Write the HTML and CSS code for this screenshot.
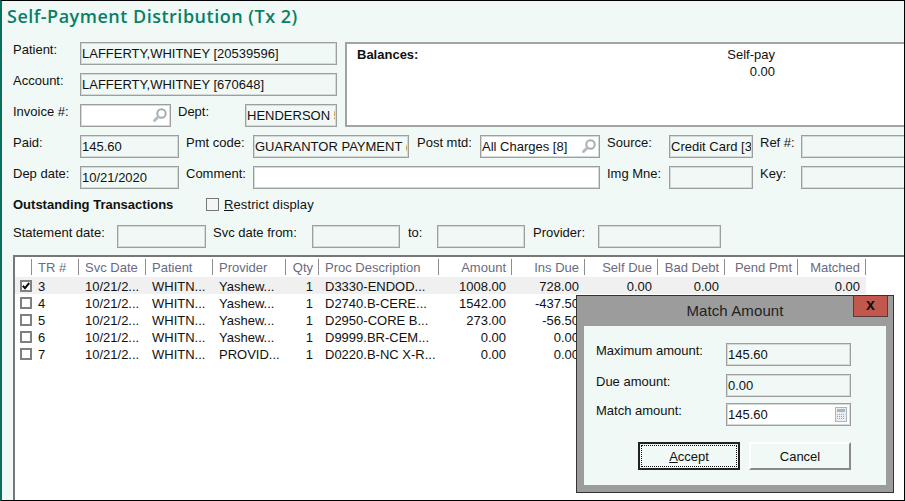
FILE: index.html
```html
<!DOCTYPE html>
<html lang="en">
<head>
    <meta charset="UTF-8">
    <title>Self-Payment Distribution</title>
    <link rel="stylesheet" href="styles.css">
</head>
<body>
<div class="page">
    <div class="title">Self-Payment Distribution (Tx 2)</div>

    <div class="form">
        <div class="top">
            <div class="top-left">
                <div class="row">
                    <label class="lbl w67">Patient:</label>
                    <input class="fld w257" type="text" readonly value="LAFFERTY,WHITNEY [20539596]">
                </div>
                <div class="row">
                    <label class="lbl w67">Account:</label>
                    <input class="fld w257" type="text" readonly value="LAFFERTY,WHITNEY [670648]">
                </div>
                <div class="row">
                    <label class="lbl w67">Invoice #:</label>
                    <div class="lookup w91">
                        <input class="fld white fill" type="text" readonly>
                        <svg class="search" width="16" height="16" viewBox="0 0 16 16"><circle cx="9.5" cy="6.5" r="4.2" fill="none" stroke="#a3adb3" stroke-width="2"/><path d="M6.3 9.7 2.5 13.5" stroke="#b4bcc2" stroke-width="3" stroke-linecap="round"/></svg>
                    </div>
                    <label class="lbl w67 ml7">Dept:</label>
                    <input class="fld w92" type="text" readonly value="HENDERSON 5">
                </div>
            </div>
            <div class="balances">
                <div class="bal-title">Balances:</div>
                <div class="bal-col">
                    <div>Self-pay</div>
                    <div>0.00</div>
                </div>
            </div>
        </div>

        <div class="row">
            <label class="lbl w67">Paid:</label>
            <input class="fld w99" type="text" readonly value="145.60">
            <label class="lbl w67 ml7">Pmt code:</label>
            <input class="fld w156" type="text" readonly value="GUARANTOR PAYMENT (">
            <label class="lbl w63 ml8">Post mtd:</label>
            <div class="lookup w120">
                <input class="fld white fill" type="text" readonly value="All Charges [8]">
                <svg class="search" width="16" height="16" viewBox="0 0 16 16"><circle cx="9.5" cy="6.5" r="4.2" fill="none" stroke="#a3adb3" stroke-width="2"/><path d="M6.3 9.7 2.5 13.5" stroke="#b4bcc2" stroke-width="3" stroke-linecap="round"/></svg>
            </div>
            <label class="lbl w62 ml7">Source:</label>
            <input class="fld w84" type="text" readonly value="Credit Card [3">
            <label class="lbl w41 ml7">Ref #:</label>
            <input class="fld w120" type="text" readonly>
        </div>
        <div class="row">
            <label class="lbl w67">Dep date:</label>
            <input class="fld w99" type="text" readonly value="10/21/2020">
            <label class="lbl w67 ml7">Comment:</label>
            <input class="fld white w347" type="text" readonly>
            <label class="lbl w62 ml7">Img Mne:</label>
            <input class="fld w84" type="text" readonly>
            <label class="lbl w41 ml7">Key:</label>
            <input class="fld w120" type="text" readonly>
        </div>

        <div class="section">
            <b class="section-name">Outstanding Transactions</b>
            <span class="box"></span>
            <span class="restrict"><u>R</u>estrict display</span>
        </div>

        <div class="row">
            <label class="lbl w104">Statement date:</label>
            <input class="fld w89" type="text" readonly>
            <label class="lbl w99 ml7">Svc date from:</label>
            <input class="fld w88" type="text" readonly>
            <label class="lbl w29 ml8">to:</label>
            <input class="fld w88" type="text" readonly>
            <label class="lbl w65 ml8">Provider:</label>
            <input class="fld w123" type="text" readonly>
        </div>
    </div>

    <div class="grid-box">
        <table class="grid">
            <colgroup>
                <col class="c-check"><col class="c-tr"><col class="c-date"><col class="c-pat"><col class="c-prov"><col class="c-qty"><col class="c-desc"><col class="c-num"><col class="c-num"><col class="c-num"><col class="c-bad"><col class="c-num"><col class="c-match">
            </colgroup>
            <thead>
                <tr>
                    <th></th><th>TR #</th><th>Svc Date</th><th>Patient</th><th>Provider</th>
                    <th class="num">Qty</th><th>Proc Description</th><th class="num">Amount</th>
                    <th class="num">Ins Due</th><th class="num">Self Due</th><th class="num">Bad Debt</th>
                    <th class="num">Pend Pmt</th><th class="num">Matched</th>
                </tr>
            </thead>
            <tbody>
                <tr class="selected">
                    <td><span class="tick"><svg width="8" height="8" viewBox="0 0 8 8"><path d="M.8 3.8 3 6.2 7.2 1" fill="none" stroke="#111" stroke-width="2"/></svg></span></td>
                    <td>3</td><td>10/21/2...</td><td>WHITN...</td><td>Yashew...</td><td class="num">1</td><td>D3330-ENDOD...</td>
                    <td class="num">1008.00</td><td class="num">728.00</td><td class="num">0.00</td><td class="num">0.00</td><td class="num"></td><td class="num">0.00</td>
                </tr>
                <tr>
                    <td><span class="tick"></span></td>
                    <td>4</td><td>10/21/2...</td><td>WHITN...</td><td>Yashew...</td><td class="num">1</td><td>D2740.B-CERE...</td>
                    <td class="num">1542.00</td><td class="num">-437.50</td><td colspan="4"></td>
                </tr>
                <tr>
                    <td><span class="tick"></span></td>
                    <td>5</td><td>10/21/2...</td><td>WHITN...</td><td>Yashew...</td><td class="num">1</td><td>D2950-CORE B...</td>
                    <td class="num">273.00</td><td class="num">-56.50</td><td colspan="4"></td>
                </tr>
                <tr>
                    <td><span class="tick"></span></td>
                    <td>6</td><td>10/21/2...</td><td>WHITN...</td><td>Yashew...</td><td class="num">1</td><td>D9999.BR-CEM...</td>
                    <td class="num">0.00</td><td class="num">0.00</td><td colspan="4"></td>
                </tr>
                <tr>
                    <td><span class="tick"></span></td>
                    <td>7</td><td>10/21/2...</td><td>WHITN...</td><td>PROVID...</td><td class="num">1</td><td>D0220.B-NC X-R...</td>
                    <td class="num">0.00</td><td class="num">0.00</td><td colspan="4"></td>
                </tr>
            </tbody>
        </table>
    </div>

    <div class="dialog">
        <div class="dlg-title">Match Amount</div>
        <button class="dlg-close">x</button>
        <div class="dlg-body">
            <div class="dlg-row first">
                <label class="lbl w130">Maximum amount:</label>
                <input class="fld w125" type="text" readonly value="145.60">
            </div>
            <div class="dlg-row">
                <label class="lbl w130">Due amount:</label>
                <input class="fld w125" type="text" readonly value="0.00">
            </div>
            <div class="dlg-row">
                <label class="lbl w130">Match amount:</label>
                <div class="lookup w125">
                    <input class="fld white fill" type="text" readonly value="145.60">
                    <svg class="calc" width="12" height="15" viewBox="0 0 12 15">
                        <rect x=".5" y=".5" width="11" height="14" fill="#eaeef0" stroke="#aab6bf"/>
                        <rect x="2" y="2" width="8" height="3" fill="#aab6bf"/>
                        <path d="M2 7.5h8M2 9.5h8M2 11.5h8" stroke="#9aa6ae" stroke-dasharray="1 1"/>
                    </svg>
                </div>
            </div>
            <div class="dlg-buttons">
                <button class="btn btn-default"><span class="focus"><u>A</u>ccept</span></button>
                <button class="btn">Cancel</button>
            </div>
        </div>
    </div>
</div>
</body>
</html>
```

FILE: styles.css
```css
* { box-sizing: border-box; }
html, body { margin: 0; padding: 0; }
body { font-family: "Liberation Sans", Arial, sans-serif; font-size: 13px; color: #111; }

.page { position: relative; width: 905px; height: 501px; overflow: hidden; background: #f0f9f6; border-top: 1px solid #000; border-bottom: 1px solid #000; border-left: 2px solid #0a6f5c; border-right: 1px solid #000; }

.title { height: 31px; padding: 0 0 0 5px; font-family: "Open Sans", sans-serif; font-size: 18px; font-weight: 600; line-height: 30px; color: #0a7f68; letter-spacing: .5px; }

.form { padding: 10px 0 0 11px; display: flex; flex-direction: column; gap: 8px; }
.top { display: flex; gap: 8px; }
.top-left { width: 324px; flex: none; display: flex; flex-direction: column; gap: 8px; }
.row { display: flex; height: 23px; white-space: nowrap; }

.lbl { flex: none; line-height: 15px; }
.fld { flex: none; height: 23px; margin: 0; padding: 0 1px; border: 1px solid #9c9f9e; box-shadow: inset 0 0 0 1px #d5d9d7; background: #f0f9f6; font: inherit; color: #111; outline: 0; border-radius: 0; }
.white { background: #fff; }
.fill { width: 100%; }

.lookup { position: relative; flex: none; height: 23px; }
.search { position: absolute; right: 3px; top: 3px; }
.calc { position: absolute; right: 4px; top: 4px; }

.ml7 { margin-left: 7px; }
.ml8 { margin-left: 8px; }
.w29 { width: 29px; }
.w41 { width: 41px; }
.w62 { width: 62px; }
.w63 { width: 63px; }
.w65 { width: 65px; }
.w67 { width: 67px; }
.w84 { width: 84px; }
.w88 { width: 88px; }
.w89 { width: 89px; }
.w91 { width: 91px; }
.w92 { width: 92px; }
.w99 { width: 99px; }
.w104 { width: 104px; }
.w120 { width: 120px; }
.w123 { width: 123px; }
.w125 { width: 125px; }
.w130 { width: 130px; }
.w156 { width: 156px; }
.w257 { width: 257px; }
.w347 { width: 347px; }

.balances { flex: 1; height: 85px; margin-right: -4px; padding: 3px 10px; border: 2px solid #a0a4a2; background: #fff; position: relative; }
.bal-title { font-weight: bold; }
.bal-col { position: absolute; left: 370px; top: 3px; width: 58px; text-align: right; line-height: 15px; white-space: nowrap; }
.bal-col div + div { margin-top: 2px; }

.section { display: flex; align-items: center; height: 20px; margin-top: -3px; margin-bottom: 3px; }
.section-name { width: 193px; }
.box { width: 13px; height: 13px; margin-right: 5px; background: #f5f5f5; border: 1px solid #777; }
.restrict { letter-spacing: .1px; }

.grid-box { margin: 7px 0 0 11px; height: 246px; background: #fff; border-top: 2px solid #777; border-left: 2px solid #777; }
.grid { width: 850px; border-collapse: collapse; table-layout: fixed; }
.c-check { width: 17px; }
.c-tr { width: 47px; }
.c-date { width: 67px; }
.c-pat { width: 67px; }
.c-prov { width: 73px; }
.c-qty { width: 33px; }
.c-desc { width: 120px; }
.c-num { width: 73px; }
.c-bad { width: 67px; }
.c-match { width: 68px; }

.grid th { height: 20px; padding: 0 6px; font-weight: normal; text-align: left; color: #6a6a80; background: #fff; background-image: linear-gradient(#8e8e8e, #8e8e8e); background-size: 1px 16px; background-position: right 2px; background-repeat: no-repeat; white-space: nowrap; overflow: hidden; }
.grid td { height: 17px; padding: 2px 0 0 6px; vertical-align: top; white-space: nowrap; line-height: 15px; overflow: hidden; }
.grid .num { text-align: right; padding-right: 6px; padding-left: 0; }
.selected td { background: #f0f0f0; }

.tick { display: flex; align-items: center; justify-content: center; width: 12px; height: 12px; margin: 1px 0 0 -1px; background: #fff; border: 2px solid #808080; }

.dialog { position: absolute; left: 574px; top: 294px; width: 318px; height: 198px; padding: 30px 7px 7px; background: #9c9c9c; border: 1px solid #333; }
.dlg-title { position: absolute; left: 0; right: 0; top: 6px; text-align: center; font-size: 15px; line-height: 18px; color: #222; letter-spacing: .1px; }
.dlg-close { position: absolute; right: 5px; top: -1px; width: 35px; height: 22px; padding: 0 0 3px; background: #c1584d; border: 1px solid #5a3a36; border-top-color: #333; color: #111; font: bold 16px "Liberation Sans", sans-serif; }
.dlg-body { height: 159px; padding: 17px 35px 0 12px; background: #f0f9f6; display: flex; flex-direction: column; gap: 8px; }
.dlg-row { display: flex; justify-content: space-between; height: 23px; margin-bottom: -2px; white-space: nowrap; }
.dlg-row.first { margin-bottom: 0; }
.dlg-buttons { display: flex; justify-content: flex-end; gap: 9px; margin-top: 10px; }
.btn { width: 102px; height: 28px; padding: 0; background: #f0f9f6; border: 2px solid; border-color: #fff #8a8a8a #8a8a8a #fff; font: inherit; color: #111; }
.btn-default { border: 2px solid #222; padding: 1px; }
.focus { display: block; height: 100%; line-height: 22px; border: 1px dotted #111; }
```
